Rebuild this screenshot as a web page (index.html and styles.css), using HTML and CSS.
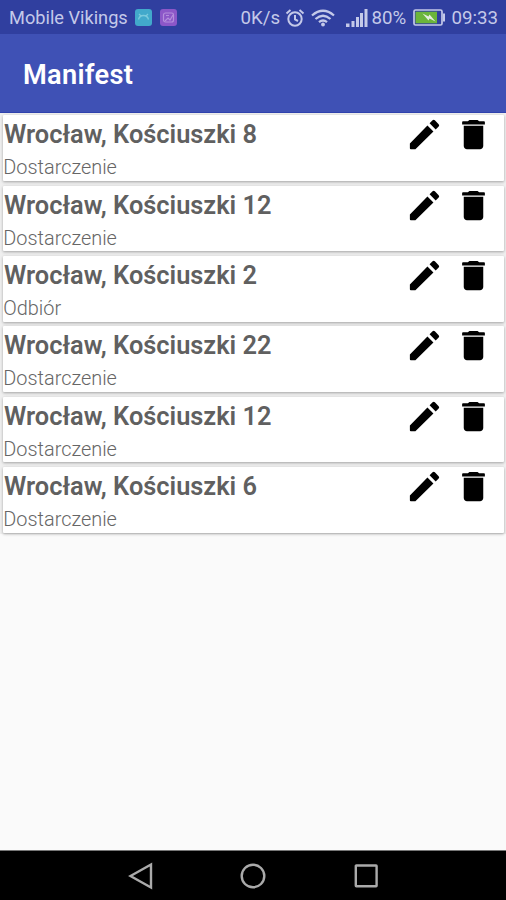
FILE: index.html
```html
<!DOCTYPE html>
<html lang="pl">
<head>
<meta charset="utf-8">
<title>Manifest</title>
<link rel="stylesheet" href="styles.css">
</head>
<body>
<svg class="defs" width="0" height="0">
  <symbol id="edit" viewBox="0 0 24 24"><path d="M3 17.6V20.4Q3 21 3.600 21H6.400L17.500 10.200L13.800 6.500ZM20.710 7.040a1 1 0 0 0 0-1.410l-2.340-2.340a1 1 0 0 0-1.410 0l-1.830 1.830 3.750 3.750z"/></symbol>
  <symbol id="trash" viewBox="0 0 24 24"><path d="M6 19c0 1.100.9 2 2 2h8c1.100 0 2-.9 2-2V6.600H6zM18.500 3.800h-3l-1-.8h-5l-1 .8h-3L5 4.200V5.800h14V4.200z"/></symbol>
</svg>
<div class="screen">
  <div class="status">
    <span class="carrier">Mobile Vikings</span>
    <svg class="app" viewBox="0 0 17 17"><rect width="17" height="17" rx="3" fill="#42a9cb"/><path d="M3.500 10.500Q4.500 6.500 8.500 6.500T13.500 10.500M4 5l2 2M13 5l-2 2" fill="none" stroke="#7bcadd" stroke-width="1.300"/></svg>
    <svg class="app app-second" viewBox="0 0 17 17"><rect width="17" height="17" rx="3" fill="#8c57c8"/><rect x="3.500" y="4" width="10" height="9" rx="2" fill="none" stroke="#b48edc" stroke-width="1.200"/><path d="M5 12l3-3 2 2 3-5M6 6.500h3" fill="none" stroke="#b48edc" stroke-width="1.200"/></svg>
    <span class="speed">0K/s</span>
    <svg class="alarm" viewBox="0 0 20 20" fill="none" stroke="#c4c9e9" stroke-width="2"><circle cx="10" cy="11" r="6.700"/><path d="M10 7v4.500l3 1.500M1.500 5.500L5.500 2M18.500 5.500L14.500 2"/></svg>
    <svg class="wifi" viewBox="0 0 24 18" fill="none" stroke="#c4c9e9" stroke-width="2.300"><path d="M1 6.500Q12-3 23 6.500M4.500 10Q12 3.500 19.500 10M8 13.200Q12 9.800 16 13.200"/><circle cx="12" cy="15.500" r="1.900" fill="#c4c9e9" stroke="none"/></svg>
    <svg class="signal" viewBox="0 0 22 18" fill="#c4c9e9"><path d="M0 14.500h3.500V18H0zM5.500 12h3v6h-3zM10 8h3v10h-3zM14 4h3v14h-3zM18.500 0H21.500v18h-3z"/></svg>
    <span class="percent">80%</span>
    <svg class="battery" viewBox="0 0 32 17"><rect x="1" y="1" width="28" height="15" rx="1.500" fill="#303f9f" stroke="#c4c9e9" stroke-width="1.700"/><rect x="2.500" y="2.700" width="21.500" height="11.600" fill="#6bb53b"/><path d="M30 4.500h2v8h-2z" fill="#c4c9e9"/><path d="M9.500 4.500l6 3 1-2 6 7-6-3-1 2z" fill="#e4eddf"/></svg>
    <span class="clock">09:33</span>
  </div>
  <header class="toolbar"><h1>Manifest</h1></header>
  <main class="list">
    <article class="card"><div class="text"><h2>Wrocław, Kościuszki 8</h2><p>Dostarczenie</p></div><div class="actions"><svg><use href="#edit"/></svg><svg><use href="#trash"/></svg></div></article>
    <article class="card"><div class="text"><h2>Wrocław, Kościuszki 12</h2><p>Dostarczenie</p></div><div class="actions"><svg><use href="#edit"/></svg><svg><use href="#trash"/></svg></div></article>
    <article class="card"><div class="text"><h2>Wrocław, Kościuszki 2</h2><p>Odbiór</p></div><div class="actions"><svg><use href="#edit"/></svg><svg><use href="#trash"/></svg></div></article>
    <article class="card"><div class="text"><h2>Wrocław, Kościuszki 22</h2><p>Dostarczenie</p></div><div class="actions"><svg><use href="#edit"/></svg><svg><use href="#trash"/></svg></div></article>
    <article class="card"><div class="text"><h2>Wrocław, Kościuszki 12</h2><p>Dostarczenie</p></div><div class="actions"><svg><use href="#edit"/></svg><svg><use href="#trash"/></svg></div></article>
    <article class="card"><div class="text"><h2>Wrocław, Kościuszki 6</h2><p>Dostarczenie</p></div><div class="actions"><svg><use href="#edit"/></svg><svg><use href="#trash"/></svg></div></article>
  </main>
  <nav class="navbar">
    <svg viewBox="0 0 28 28"><path d="M3.500 14L24 2.500V25.500Z"/></svg>
    <svg viewBox="0 0 28 28"><circle cx="14" cy="14" r="11.300"/></svg>
    <svg viewBox="0 0 28 28"><rect x="3.800" y="3.500" width="20.800" height="20.800" rx=".5"/></svg>
  </nav>
</div>
</body>
</html>
```

FILE: styles.css
```css
* { box-sizing: border-box; }
body { margin: 0; font-family: Roboto, sans-serif; }
h1, h2, p { margin: 0; }
svg { display: block; flex: none; }
.defs { position: absolute; }
.screen { width: 506px; height: 900px; display: flex; flex-direction: column; background: #fafafa; overflow: hidden; }
.status { height: 34px; flex: none; display: flex; align-items: center; padding: 1px 8px 0 9px; background: #303f9f; color: #c4c9e9; font-size: 18.7px; white-space: nowrap; }
.carrier { width: 126px; flex: none; font-size: 18.2px; }
.app { width: 17px; height: 17px; }
.app-second { margin-left: 8px; }
.speed { width: 45px; margin-left: auto; }
.alarm { width: 20px; height: 20px; }
.wifi { width: 24px; height: 18px; margin-left: 6px; }
.signal { width: 22px; height: 18px; margin-left: 11px; }
.percent { width: 38px; margin-left: 3px; }
.battery { width: 32px; height: 17px; margin-left: 4px; }
.clock { margin-left: 6px; }
.toolbar { height: 79px; flex: none; display: flex; align-items: center; padding: 4px 24px 0 23px; background: #3f51b5; border-bottom: 1px solid #2f42ad; }
h1 { color: #fff; font-size: 27.2px; font-weight: 600; line-height: 34px; letter-spacing: .3px; }
.list { flex: 1; display: flex; flex-direction: column; gap: 4.8px; padding: 2.3px 2px 0 3px; background: linear-gradient(#efefef 0 421px, #fafafa 421px); }
.card { height: 65.6px; display: flex; background: #fff; border-radius: 1px; box-shadow: 0 1px 3px rgba(0, 0, 0, .32); }
.text { flex: 1; color: #606060; }
h2 { font-size: 25.4px; font-weight: 600; line-height: 38px; height: 38px; padding-left: 1px; }
p { font-size: 19.9px; font-weight: 350; line-height: 30px; color: #666; padding-left: .3px; }
.actions { display: flex; gap: 10px; padding-right: 11px; }
.actions svg { width: 39px; height: 39px; fill: #000; }
.navbar { height: 50px; flex: none; display: flex; justify-content: center; align-items: center; gap: 84.5px; background: #000; border-top: 1px solid #777; }
.navbar svg { width: 28px; height: 28px; fill: none; stroke: #aaa; stroke-width: 2.4; }
```
